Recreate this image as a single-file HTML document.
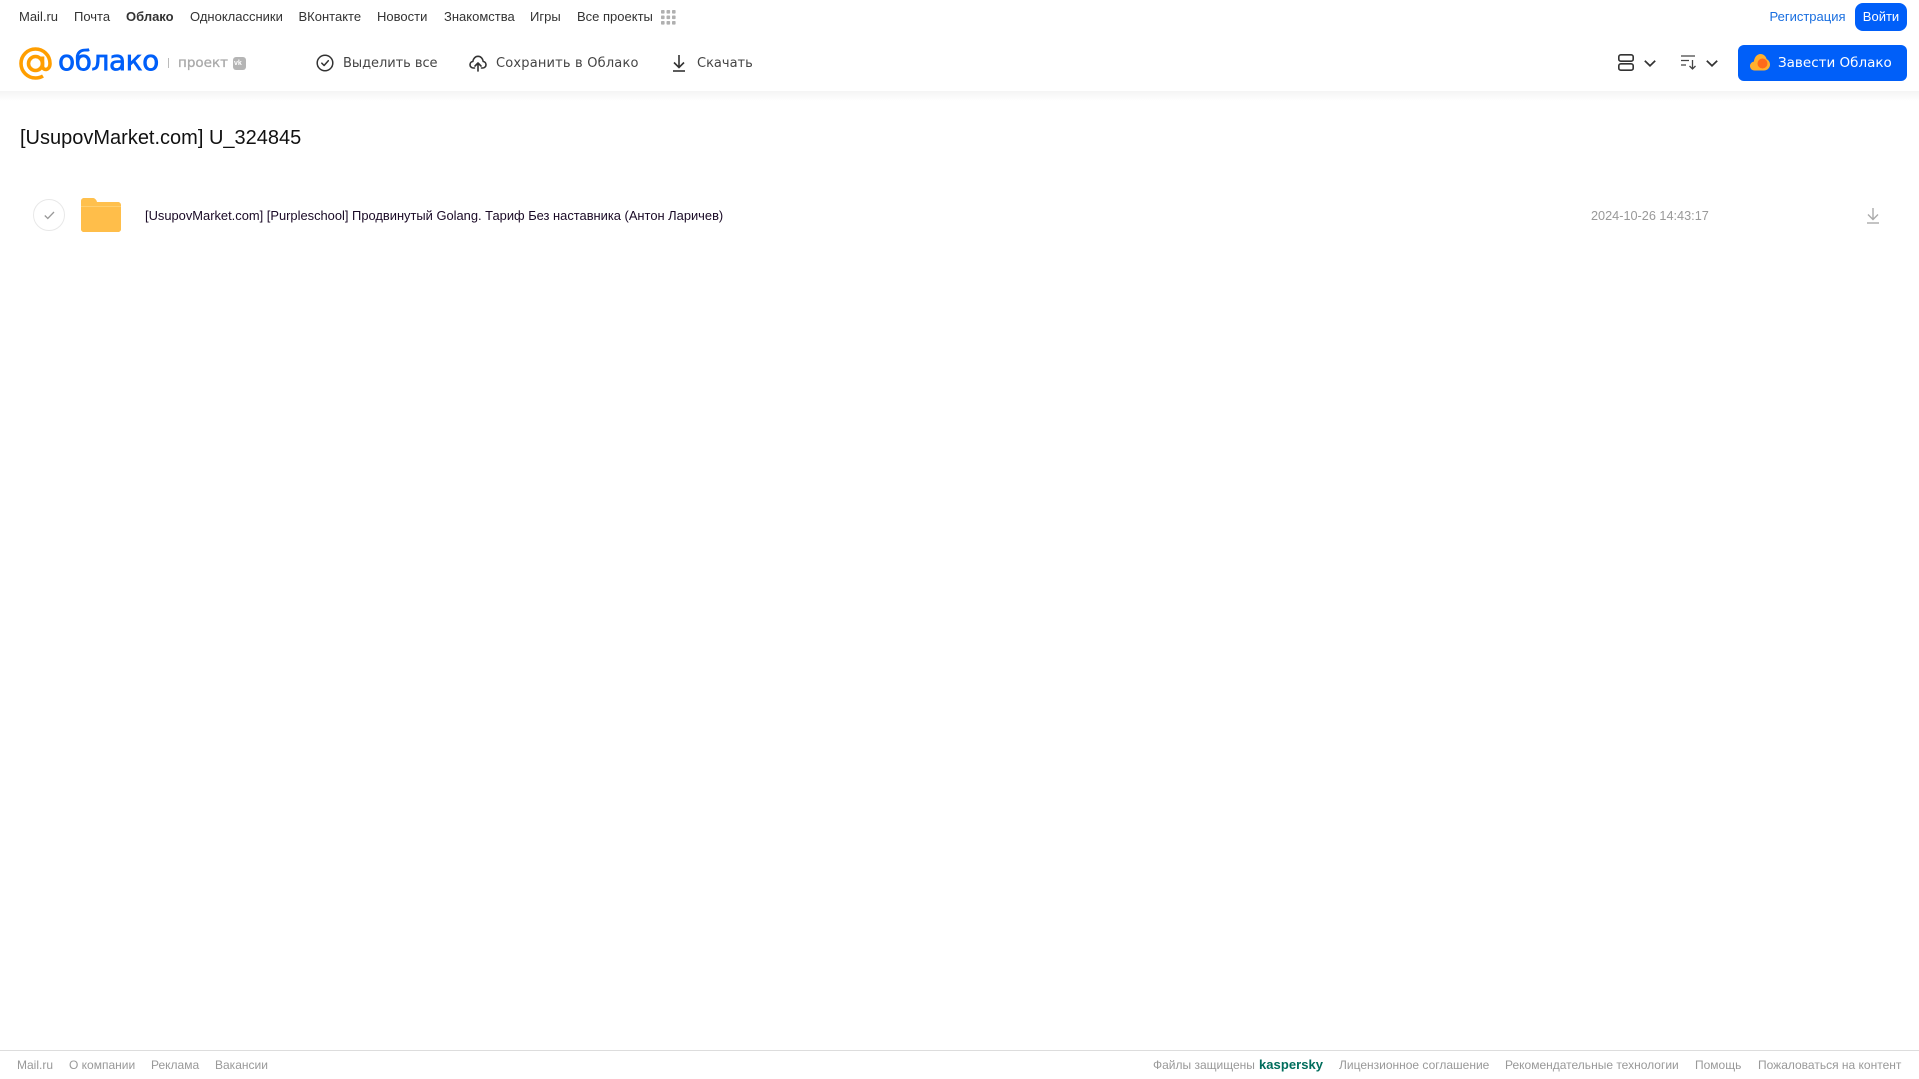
<!DOCTYPE html>
<html lang="ru"><head><meta charset="utf-8"><title>Облако</title>
<style>
html,body{margin:0;padding:0;background:#fff;width:1919px;height:1079px;overflow:hidden;font-family:"Liberation Sans",sans-serif}
.t{position:absolute;white-space:nowrap;line-height:16px}
.n{top:9px;font-size:13px;color:#333}
.b{top:56px;color:#444;font-family:"DejaVu Sans",sans-serif;font-size:13px}
.f{top:1057px;font-size:12px;color:#999}
svg{position:absolute;overflow:visible}
#shadow{position:absolute;left:0;top:91px;width:1919px;height:10px;background:linear-gradient(#f4f4f4,#fff)}
</style></head><body>
<div id="shadow"></div>
<span class="t n" style="left:19px">Mail.ru</span>
<span class="t n" style="left:74px">Почта</span>
<span class="t n" style="left:126px;font-weight:bold">Облако</span>
<span class="t n" style="left:190px">Одноклассники</span>
<span class="t n" style="left:298.500px">ВКонтакте</span>
<span class="t n" style="left:377px">Новости</span>
<span class="t n" style="left:444px">Знакомства</span>
<span class="t n" style="left:530px">Игры</span>
<span class="t n" style="left:577px">Все проекты</span>
<svg style="left:661px;top:10px" width="15" height="15" fill="#b0b0b0"><rect x="0" y="0" width="3.6" height="3.6" rx=".8"/><rect x="5.5" y="0" width="3.6" height="3.6" rx=".8"/><rect x="11" y="0" width="3.6" height="3.6" rx=".8"/><rect x="0" y="5.5" width="3.6" height="3.6" rx=".8"/><rect x="5.5" y="5.5" width="3.6" height="3.6" rx=".8"/><rect x="11" y="5.5" width="3.6" height="3.6" rx=".8"/><rect x="0" y="11" width="3.6" height="3.6" rx=".8"/><rect x="5.5" y="11" width="3.6" height="3.6" rx=".8"/><rect x="11" y="11" width="3.6" height="3.6" rx=".8"/></svg>
<span class="t n" style="left:1769.500px;color:#1a6fe0">Регистрация</span>
<div class="t" style="left:1855px;top:3px;width:52px;height:28px;line-height:27px;background:#005ff9;border-radius:8px;color:#fff;font-size:13px;text-align:center">Войти</div>

<svg style="left:19px;top:47px" width="33" height="33" viewBox="0 0 33 33" fill="none" stroke="#ff9e00" stroke-width="3.6"><circle cx="16.5" cy="16.5" r="7"/><path d="M23.5 9.5v9.5c0 5 7.500 5 7.500-2.500C31 8 24 2 16.500 2 8.500 2 2 8.500 2 16.500S8.500 31 16.500 31c3 0 5.500-.8 7.500-2"/></svg>
<span class="t" style="left:58px;top:43px;line-height:36px;font-size:28px;letter-spacing:-.45px;color:#005ff9;font-family:'DejaVu Sans',sans-serif;-webkit-text-stroke:.7px #005ff9">облако</span>
<div style="position:absolute;left:168px;top:58px;width:1px;height:10px;background:#bbb"></div>
<span class="t" style="left:178px;top:55px;font-size:13.5px;color:#aaa;font-family:'DejaVu Sans',sans-serif;-webkit-text-stroke:.3px #aaa">проект</span>
<div style="position:absolute;left:233px;top:57px;width:13px;height:13px;background:#b5b5b5;border-radius:3px"></div>
<span class="t" style="left:234px;top:59px;font-size:7px;line-height:9px;color:#fff;font-weight:bold">vk</span>

<svg style="left:316px;top:54px" width="18" height="18" viewBox="0 0 18 18" fill="none" stroke="#333" stroke-width="1.5"><circle cx="9" cy="9" r="7.800"/><path d="M5.800 9.200l2.300 2.300 4.200-4.800" stroke-linecap="round" stroke-linejoin="round"/></svg>
<span class="t b" style="left:343px;letter-spacing:-.05px">Выделить все</span>
<svg style="left:469px;top:54px" width="18" height="18" viewBox="0 0 18 18" fill="none" stroke="#333" stroke-width="1.600" stroke-linecap="round" stroke-linejoin="round"><path d="M5.500 14H4.500C2.500 14 1 12.500 1 10.700 1 9 2.200 7.700 3.800 7.500 4.200 4.500 6.400 2.300 9 2.300c2.800 0 4.800 2.200 5.200 5.200 1.600.2 2.800 1.500 2.800 3.200 0 1.800-1.500 3.300-3.500 3.300h-1"/><path d="M9 17V9.200M6 12l3-3 3 3"/></svg>
<span class="t b" style="left:496px;letter-spacing:.18px">Сохранить в Облако</span>
<svg style="left:672px;top:54px" width="14" height="18" viewBox="0 0 14 18" fill="none" stroke="#333" stroke-width="1.600"><path d="M7 1v12M2 8.500l5 5 5-5"/><path d="M1 17h12"/></svg>
<span class="t b" style="left:697px">Скачать</span>

<svg style="left:1618px;top:54px" width="16" height="17" viewBox="0 0 16 17" fill="none" stroke="#333" stroke-width="1.600"><rect x=".8" y=".8" width="14.400" height="6.400" rx="2"/><rect x=".8" y="9.800" width="14.400" height="6.400" rx="2"/></svg>
<svg style="left:1644px;top:60px" width="12" height="7" fill="none" stroke="#333" stroke-width="1.700"><path d="M.8 .8L6 5.800 11.200 .8"/></svg>
<svg style="left:1681px;top:55px" width="16" height="15" fill="none" stroke="#444" stroke-width="1.300"><path d="M0 1h14M0 5.500h8M0 10h5M11.500 5v9M8.500 11l3 3 3-3"/></svg>
<svg style="left:1706px;top:60px" width="12" height="7" fill="none" stroke="#333" stroke-width="1.700"><path d="M.8 .8L6 5.800 11.200 .8"/></svg>
<div style="position:absolute;left:1738px;top:45px;width:169px;height:36px;background:#005ff9;border-radius:6px"></div>
<svg style="left:1750px;top:54px" width="20" height="17" viewBox="0 0 20 17"><path d="M4.500 16.500C2 16.500 0 14.500 0 12c0-2.300 1.700-4.100 3.900-4.400C4.400 3.300 7 0 10.500 0c3 0 5.500 2.200 6.100 5.100C18.600 6 20 8 20 10.500c0 3.300-2.700 6-6 6z" fill="#ffb02e"/><circle cx="12.500" cy="9.500" r="5" fill="#ff6a1a"/></svg>
<span class="t" style="left:1778px;top:55px;font-size:13.500px;color:#fff;font-family:'DejaVu Sans',sans-serif">Завести Облако</span>

<span class="t" style="left:20px;top:126px;line-height:24px;font-size:20px;color:#111">[UsupovMarket.com] U_324845</span>

<div style="position:absolute;left:33px;top:199px;width:30px;height:30px;border:1px solid #e8e8e8;border-radius:50%"></div>
<svg style="left:44px;top:211px" width="11" height="9" fill="none" stroke="#999" stroke-width="1.300"><path d="M.8 4.500l3 3L10 1"/></svg>
<svg style="left:81px;top:198px" width="40" height="34" viewBox="0 0 40 34"><path d="M3 0h9c1.500 0 2.500 1 3.500 2.500L16 4h21c1.700 0 3 1.300 3 3v24c0 1.700-1.300 3-3 3H3c-1.700 0-3-1.300-3-3V3c0-1.700 1.300-3 3-3z" fill="#ffc04d"/><path d="M0 9h40v22c0 1.700-1.300 3-3 3H3c-1.700 0-3-1.300-3-3z" fill="#ffbe4a"/><path d="M0 8h40v1H0z" fill="#ffcf70"/></svg>
<span class="t" style="left:145px;top:208px;font-size:12.900px;color:#1a0a26">[UsupovMarket.com] [Purpleschool] Продвинутый Golang. Тариф Без наставника (Антон Ларичев)</span>
<span class="t" style="left:1591px;top:208px;font-size:12.700px;color:#999">2024-10-26 14:43:17</span>
<svg style="left:1866px;top:207px" width="14" height="17" fill="none" stroke="#aaa" stroke-width="1.400"><path d="M7 1v11M2 7.500l5 5 5-5"/><path d="M1 16h12"/></svg>

<div style="position:absolute;left:0;top:1050px;width:1919px;height:1px;background:#ddd"></div>
<span class="t f" style="left:17px">Mail.ru</span>
<span class="t f" style="left:69px">О компании</span>
<span class="t f" style="left:151px">Реклама</span>
<span class="t f" style="left:215px">Вакансии</span>
<span class="t f" style="left:1153px">Файлы защищены</span>
<span class="t f" style="left:1259px;font-weight:bold;color:#006d5c;font-size:13px;letter-spacing:.05px">kaspersky</span>
<span class="t f" style="left:1339px">Лицензионное соглашение</span>
<span class="t f" style="left:1505px">Рекомендательные технологии</span>
<span class="t f" style="left:1695px">Помощь</span>
<span class="t f" style="left:1758px">Пожаловаться на контент</span>
</body></html>
